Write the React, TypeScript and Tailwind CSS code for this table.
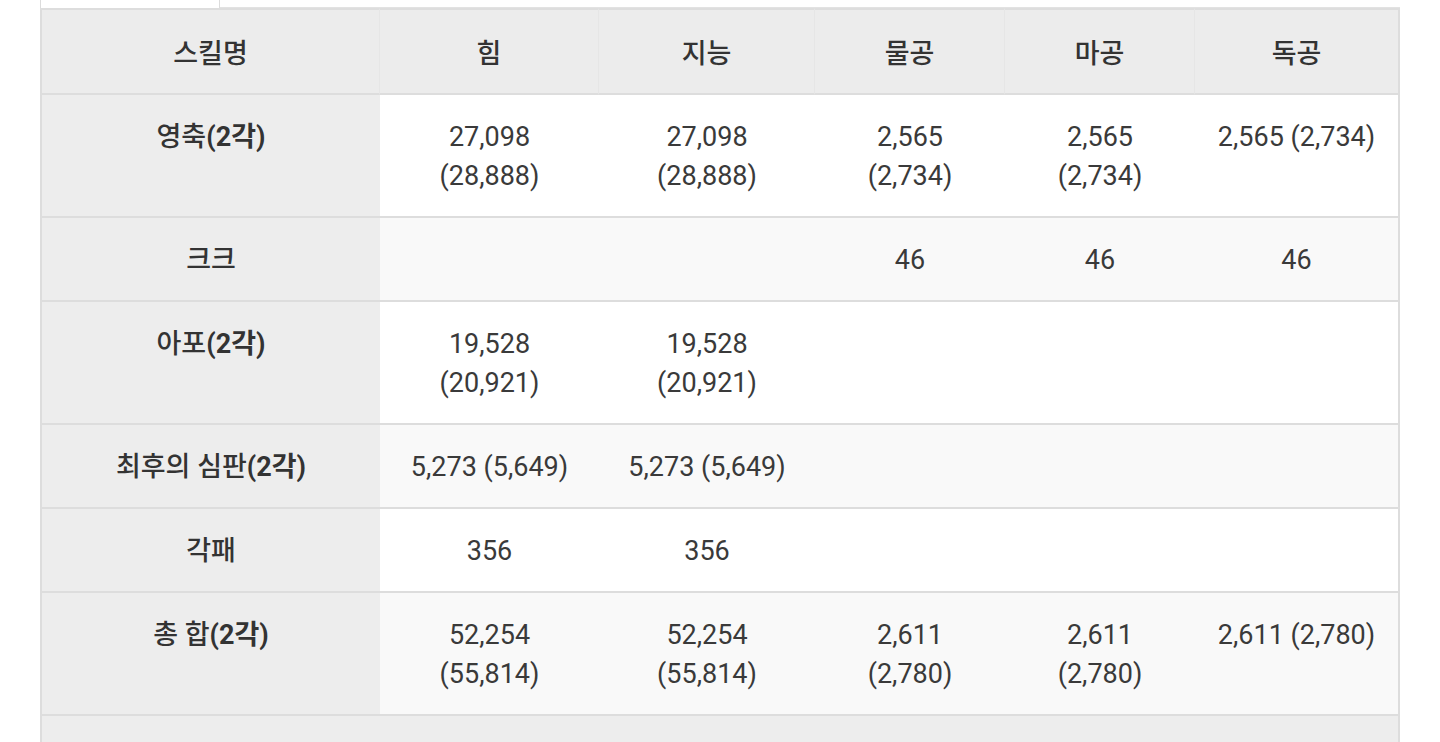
import React from "react";

type Row = {
  name: string;
  suffix?: string;
  cells: string[];
  light?: boolean;
};

const rows: Row[] = [
  {
    name: "영축",
    suffix: "(2각)",
    cells: ["27,098 (28,888)", "27,098 (28,888)", "2,565 (2,734)", "2,565 (2,734)", "2,565 (2,734)"],
  },
  { name: "크크", cells: ["", "", "46", "46", "46"], light: true },
  { name: "아포", suffix: "(2각)", cells: ["19,528 (20,921)", "19,528 (20,921)", "", "", ""] },
  { name: "최후의 심판", suffix: "(2각)", cells: ["5,273 (5,649)", "5,273 (5,649)", "", "", ""], light: true },
  { name: "각패", cells: ["356", "356", "", "", ""] },
  {
    name: "총 합",
    suffix: "(2각)",
    cells: ["52,254 (55,814)", "52,254 (55,814)", "2,611 (2,780)", "2,611 (2,780)", "2,611 (2,780)"],
    light: true,
  },
];

const headers = ["힘", "지능", "물공", "마공", "독공"];
const widths = ["w-[219px]", "w-[216px]", "w-[190px]", "w-[190px]", "w-[205px]"];

export default function App() {
  return (
    <div className="w-[1440px] h-[742px] overflow-hidden bg-white pl-[40px] font-[Roboto,'Noto_Sans_CJK_KR',sans-serif] text-[27px] text-[#3a3a3a]">
      <div className="flex h-[8px] w-[1360px]">
        <div className="w-[180px] border-x border-[#dcdcdc] bg-white" />
        <div className="flex-1 border-b border-[#e2e2e2] bg-white" />
      </div>
      <table className="table-fixed border-separate border-spacing-0 w-[1360px]">
        <thead>
          <tr>
            <th className="w-[340px] bg-[#ececec] border-t-2 border-b-2 border-l-2 border-[#dddddd] border-r border-r-[#e6e6e6] pt-[25px] pb-[19px] px-[20px] leading-[39px] font-medium text-[#333] text-center align-top">
              스킬명
            </th>
            {headers.map((h, i) => (
              <th
                key={h}
                className={`${widths[i]} bg-[#ececec] border-t-2 border-b-2 border-[#dddddd] ${
                  i === headers.length - 1 ? "border-r-2" : "border-r border-r-[#e6e6e6]"
                } pt-[25px] pb-[19px] px-[20px] leading-[39px] font-medium text-[#333] text-center align-top`}
              >
                {h}
              </th>
            ))}
          </tr>
        </thead>
        <tbody>
          {rows.map((r) => (
            <tr key={r.name}>
              <td className="bg-[#ededed] border-b-2 border-l-2 border-[#dddddd] pt-[23px] pb-[20px] px-[20px] leading-[39px] text-[#333] text-center align-top">
                <span className="font-medium">{r.name}</span>
                {r.suffix && <span className="font-bold">{r.suffix}</span>}
              </td>
              {r.cells.map((c, i) => (
                <td
                  key={i}
                  className={`${r.light ? "bg-[#f9f9f9]" : "bg-white"} border-b-2 border-[#dddddd] ${
                    i === r.cells.length - 1 ? "border-r-2" : ""
                  } pt-[23px] pb-[20px] px-[20px] leading-[39px] text-center align-top`}
                >
                  {c}
                </td>
              ))}
            </tr>
          ))}
          <tr>
            <td colSpan={6} className="bg-[#ededed] border-l-2 border-r-2 border-[#dddddd] h-[80px]" />
          </tr>
        </tbody>
      </table>
    </div>
  );
}
